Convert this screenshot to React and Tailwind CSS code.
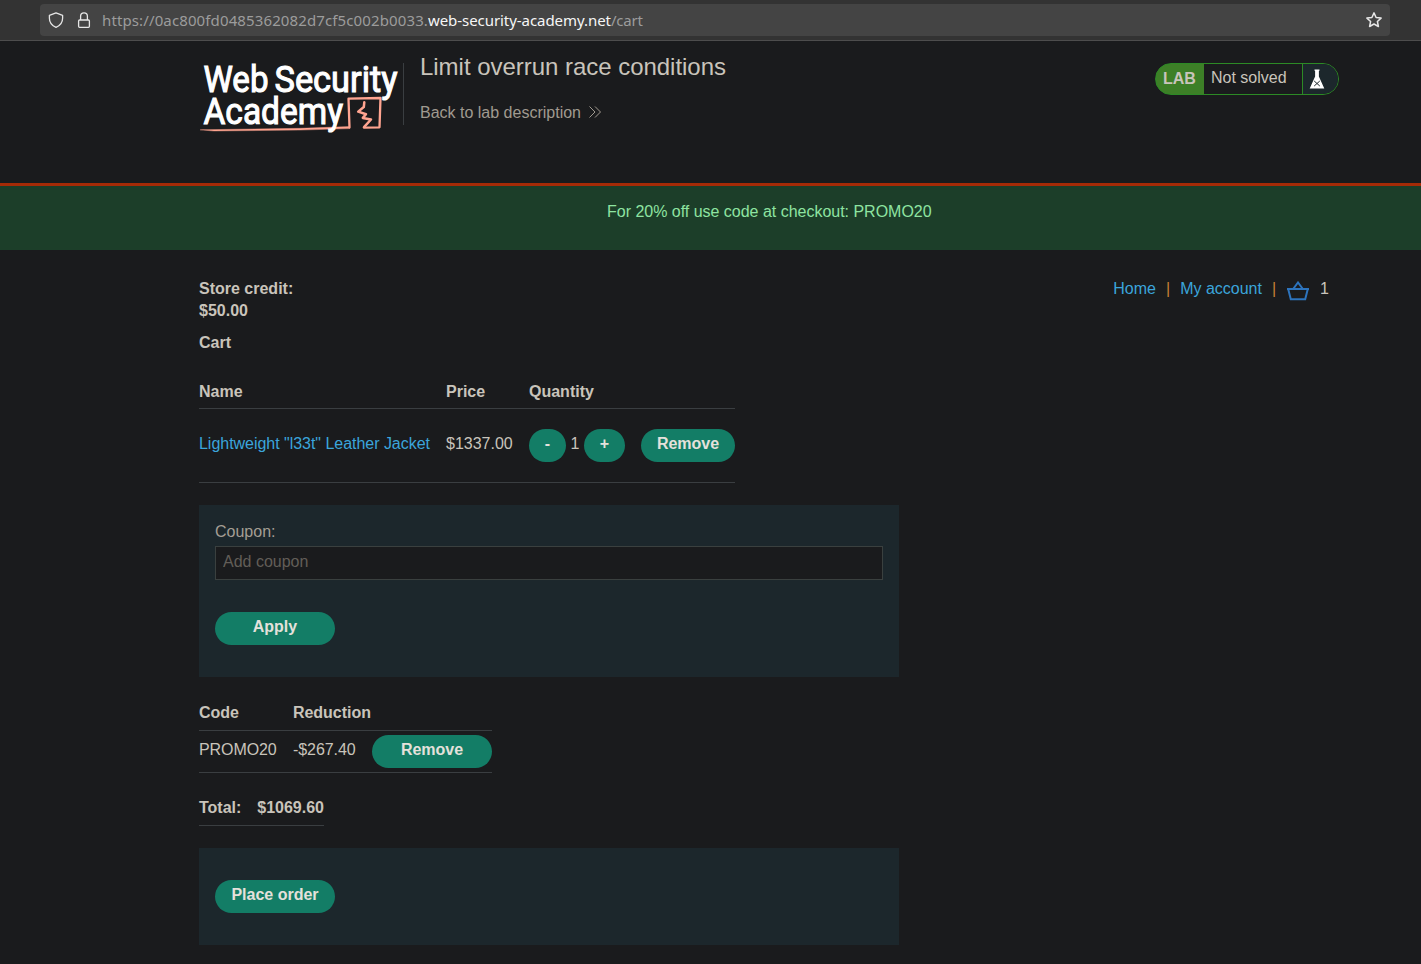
import React from "react";

const Pill = ({ children, className = "" }) => (
  <button className={`h-[33px] shrink-0 rounded-full bg-[#137d66] pb-[4px] text-center font-bold leading-[22px] text-[#e4e1db] ${className}`}>
    {children}
  </button>
);

const BrowserBar = () => (
  <div className="h-[41px] border-b border-[#4d4d4d] bg-[#333333] pl-[40px] pr-[31px] pt-[4px]">
    <div className="flex h-8 items-center rounded bg-[#444444] pl-2 pr-2 text-[#e6e6e6]">
      <svg width="16" height="16" viewBox="0 0 16 16" fill="none" stroke="currentColor" strokeWidth="1.3" strokeLinejoin="round">
        <path d="M8 .9 14.6 3.3V6.2c0 4-2.6 7.4-6.6 9.1C4 13.6 1.4 10.2 1.4 6.2V3.3Z" />
      </svg>
      <svg className="ml-[12px]" width="16" height="16" viewBox="0 0 16 16" fill="none" stroke="currentColor" strokeWidth="1.3">
        <rect x="2.6" y="8" width="10.8" height="7.3" rx="1" />
        <path d="M4.6 8V4.2a3.4 3.4 0 0 1 6.8 0V8" />
      </svg>
      <div className="ml-[10px] whitespace-nowrap font-['Noto_Sans',sans-serif] text-[15px] leading-5 text-[#9c9c9c]">
        <span className="tracking-[0.12px]">https://0ac800fd0485362082d7cf5c002b0033.</span>
        <span className="tracking-[-0.06px] text-[#f6f6f6]">web-security-academy.net</span>
        <span className="tracking-[-0.2px]">/cart</span>
      </div>
      <svg className="ml-auto" width="16" height="16" viewBox="0 0 16 16" fill="none" stroke="currentColor" strokeWidth="1.5" strokeLinejoin="round">
        <path d="m8 .9 2.100 4.600 5 .6-3.700 3.400 1 5L8 12l-4.400 2.500 1-5L.9 6.100l5-.6Z" />
      </svg>
    </div>
  </div>
);

const Logo = () => (
  <svg className="mt-[15px] shrink-0 overflow-visible" width="200" height="80" viewBox="0 0 200 80" fill="none">
    <g stroke="#ffa490" strokeLinejoin="round" strokeLinecap="round">
      <path d="M149.500 71.500 148.500 42.600 180.500 42 179.500 71.300 163.800 71.600" strokeWidth="2.300" />
      <path d="M164.300 46.300 163.800 51 158.200 55.600 166 58.200 162.800 61.900 171 63.500 164.200 70.800" strokeWidth="2.500" />
      <path d="M.5 73.800 100 72.300 149.500 70.600V72.600L100 74.100 14 75Z" fill="#ffa490" strokeWidth=".4" />
    </g>
    <g fill="#ffffff" stroke="#ffffff" strokeWidth="1.1" className="font-[Roboto,sans-serif] text-[37.5px] font-normal">
      <text x="3.500" y="35.500" textLength="65" lengthAdjust="spacingAndGlyphs">Web</text>
      <text x="74.500" y="35.500" textLength="123" lengthAdjust="spacingAndGlyphs">Security</text>
      <text x="3.500" y="68" textLength="139.500" lengthAdjust="spacingAndGlyphs">Academy</text>
    </g>
  </svg>
);

const Header = () => (
  <header className="flex h-[142px] pl-[200px] pr-[82px]">
    <Logo />
    <div className="ml-[3px] mt-[22px] h-[62px] w-px bg-[#3a3e41]" />
    <div className="ml-[16px] pt-[11px]">
      <h2 className="whitespace-nowrap text-[24px] leading-[30px] tracking-[-0.03px]">Limit overrun race conditions</h2>
      <a className="mt-[20px] flex items-center whitespace-nowrap leading-[22px] text-[#a09a90]">
        Back to lab description
        <svg className="mb-[2px] ml-[8px]" width="12" height="12" viewBox="0 0 12 12" fill="none" stroke="currentColor" strokeWidth="1">
          <path d="m.5 .5 5.500 5.500-5.500 5.500M6 .5 11.500 6 6 11.500" />
        </svg>
      </a>
    </div>
    <div className="ml-auto mt-[22px] flex h-8 w-[184px] overflow-hidden rounded-full border border-[#2c8a25] bg-[linear-gradient(to_right,#3d7f27_48px,#1a1b1d_48px)]">
      <div className="w-[48px] pl-[7px] font-bold leading-[29px]">LAB</div>
      <div className="w-[98px] pl-[7px] leading-[27px]">Not solved</div>
      <div className="flex-1 border-l border-[#2c8a25] bg-[#1c272c] pl-[6px] pt-[5px]">
        <svg width="16" height="20" viewBox="0 0 16 20">
          <path d="M5.500 .5h5V1.700h-.6V7.500L15.300 19.500H.7L6.100 7.500V1.700H5.500Z" fill="#fff" />
          <path d="m5.200 12 5.600 5m0-5-5.600 5" stroke="#1c272c" strokeWidth="1" />
        </svg>
      </div>
    </div>
  </header>
);

export default function App() {
  return (
    <div className="h-[964px] w-[1421px] overflow-hidden bg-[#1a1b1d] font-['Liberation_Sans',Arial,sans-serif] text-[16px] leading-[22px] text-[#c9c4bb]">
      <BrowserBar />
      <Header />
      <div className="h-[67px] border-t-[3px] border-[#a52b07] bg-[#1c3e29] pl-[607px] pt-[15px] text-[#8ee4a1]">
        <p className="whitespace-nowrap tracking-[-0.015px]">For 20% off use code at checkout: PROMO20</p>
      </div>

      <main className="pl-[199px] pr-[93px] pt-[28px]">
        <div className="flex justify-between">
          <div className="font-bold">
            <p>Store credit:</p>
            <p>$50.00</p>
          </div>
          <nav className="flex whitespace-nowrap text-[#3ba5db]">
            <a>Home</a>
            <span className="ml-[10px] text-[#c97f35]">|</span>
            <a className="ml-[10px]">My account</a>
            <span className="ml-[10px] text-[#c97f35]">|</span>
            <svg className="ml-[11px] mt-[3px]" width="22" height="20" viewBox="0 0 22 20" fill="none" stroke="#2d74bd" strokeWidth="2">
              <path d="M0 8h22M1.2 8 3.8 18.2h14.4L20.8 8M6.5 7.5 11 1.5l4.5 6" />
            </svg>
            <span className="-mr-px ml-[11px] text-[#c9c4bb]">1</span>
          </nav>
        </div>
        <h3 className="mt-[10px] font-bold">Cart</h3>

        <section className="mt-[27px] w-[536px] whitespace-nowrap">
          <div className="flex h-[28px] border-b border-[#3a3e41] font-bold">
            <div className="w-[247px]">Name</div>
            <div className="w-[83px]">Price</div>
            <div>Quantity</div>
          </div>
          <div className="flex h-[74px] border-b border-[#3a3e41] pt-[20px]">
            <a className="w-[247px] pt-[4px] tracking-[-0.03px] text-[#3ba5db]">Lightweight "l33t" Leather Jacket</a>
            <div className="w-[83px] pt-[4px]">$1337.00</div>
            <Pill className="w-[37px]">-</Pill>
            <span className="w-[18px] pt-[4px] text-center">1</span>
            <Pill className="w-[41px]">+</Pill>
            <Pill className="ml-auto w-[94px]">Remove</Pill>
          </div>
        </section>

        <section className="mt-[22px] h-[172px] w-[700px] bg-[#1c272c] px-4 pt-[16px]">
          <label className="block text-[#a49e94]">Coupon:</label>
          <input
            className="mt-[3px] block h-[34px] w-full border border-[#3a403f] bg-[#1a1b1d] pb-[3px] pl-[7px] placeholder:text-[#625e58]"
            placeholder="Add coupon"
          />
          <Pill className="mt-8 w-[120px]">Apply</Pill>
        </section>

        <section className="mt-[25px] w-[293px] whitespace-nowrap">
          <div className="flex h-[29px] border-b border-[#3a3e41] font-bold">
            <div className="w-[94px]">Code</div>
            <div className="tracking-[-0.04px]">Reduction</div>
          </div>
          <div className="flex h-[42px] border-b border-[#3a3e41] pt-[4px]">
            <div className="w-[94px] pt-[4px] tracking-[-0.08px]">PROMO20</div>
            <div className="pt-[4px] tracking-[-0.08px]">-$267.40</div>
            <Pill className="ml-auto w-[120px]">Remove</Pill>
          </div>
        </section>

        <div className="mt-[24px] flex h-[29px] w-[125px] justify-between whitespace-nowrap border-b border-[#3a3e41] font-bold">
          <span>Total:</span>
          <span>$1069.60</span>
        </div>

        <section className="mt-[22px] h-[97px] w-[700px] bg-[#1c272c] px-4 pt-8">
          <Pill className="w-[120px]">Place order</Pill>
        </section>
      </main>
    </div>
  );
}
